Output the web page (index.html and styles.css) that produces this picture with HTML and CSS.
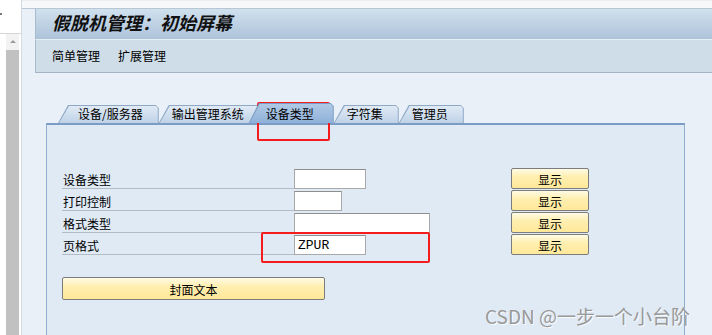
FILE: index.html
```html
<!DOCTYPE html>
<html lang="zh">
<head>
  <meta charset="UTF-8" />
  <title>假脱机管理: 初始屏幕</title>
  <link rel="stylesheet" href="styles.css">
</head>
<body>

<div class="side">
  <div class="side-top"><span class="side-dot"></span></div>
  <div class="scroll">
    <div class="scroll-up"><span class="arrow"></span></div>
    <div class="scroll-track"></div>
  </div>
</div>

<div class="main">
  <div class="main-top"></div>

  <div class="screen">
    <div class="titlebar">假脱机管理：初始屏幕</div>
    <div class="menubar">
      <a>简单管理</a>
      <a>扩展管理</a>
    </div>

    <div class="content">
      <div class="tabs">
        <div class="tab first">设备/服务器</div>
        <div class="tab">输出管理系统</div>
        <div class="tab active">设备类型</div>
        <div class="tab">字符集</div>
        <div class="tab">管理员</div>
      </div>

      <div class="panel">
        <div class="row">
          <label class="lbl">设备类型</label>
          <div class="field"><input class="inp w-m" type="text" value="" /></div>
          <button class="btn">显示</button>
        </div>
        <div class="row">
          <label class="lbl">打印控制</label>
          <div class="field"><input class="inp w-s" type="text" value="" /></div>
          <button class="btn">显示</button>
        </div>
        <div class="row">
          <label class="lbl">格式类型</label>
          <div class="field"><input class="inp w-l" type="text" value="" /></div>
          <button class="btn">显示</button>
        </div>
        <div class="row">
          <label class="lbl">页格式</label>
          <div class="field"><input class="inp w-m" type="text" value="ZPUR" /></div>
          <button class="btn">显示</button>
        </div>

        <button class="btn btn-wide">封面文本</button>
      </div>
    </div>
  </div>
</div>

<div class="mark mark-tab"></div>
<div class="mark mark-field"></div>
<div class="watermark">CSDN @一步一个小台阶</div>

</body>
</html>
```

FILE: styles.css
```css
* { margin: 0; padding: 0; box-sizing: border-box; }
body {
  width: 712px; height: 335px; overflow: hidden; display: flex; position: relative;
  font-family: "Noto Sans CJK SC", "Liberation Sans", sans-serif; font-size: 12px; color: #000;
  background: #fff;
}

/* left window strip */
.side { width: 21px; flex: none; background: #fff; }
.side-top { height: 34px; border-bottom: 1px solid #d6d6d6; position: relative; }
.side-dot { position: absolute; left: 0; top: 13px; width: 2px; height: 2px; background: #777; }
.scroll { margin-left: 6px; width: 13px; }
.scroll-up { height: 16px; background: #f2f2f2; display: flex; justify-content: center; padding-top: 6px; }
.arrow { width: 0; height: 0; border-left: 3px solid transparent; border-right: 3px solid transparent; border-bottom: 3px solid #9a9a9a; }
.scroll-track { height: 300px; background: #c1c1c1; }

.main { flex: 1; background: #e9f0f7; border-left: 1px solid #d3dae2; }
.main-top { height: 9px; background: #f7f8f9; border-top: 1px solid #eceef0; border-bottom: 1px solid #b9c7d4; }

.screen { margin-left: 13px; }
.titlebar {
  height: 31px; padding-left: 16px; border-left: 1px solid #a8bacb;
  background: linear-gradient(#d0e1ee, #adc3da);
  border-bottom: 1px solid #e6eef5;
  font-size: 18px; font-weight: bold; font-style: italic; line-height: 27px; color: #111;
}
.menubar {
  height: 33px; padding-left: 16px; display: flex; gap: 18px;
  background: #cfdde8; border-left: 1px solid #a8bacb; border-bottom: 1px solid #a2b4c4;
  line-height: 32px;
}

.content { margin-left: 11px; }

/* tab strip */
.tabs { display: flex; align-items: flex-end; height: 20px; margin-top: 30px; padding-left: 12px; }
.tab {
  position: relative; height: 18px; line-height: 18px; padding: 0 16px 0 13px;
  background: #8ea9c8; white-space: nowrap;
  clip-path: polygon(10px 0, calc(100% - 3px) 0, 100% 3px, 100% 100%, 0 100%);
}
.tab::before {
  content: ""; position: absolute; top: 1px; right: 1px; bottom: 0; left: 1px; z-index: -1;
  background: linear-gradient(#e0eaf5, #bfd2e7);
  clip-path: polygon(10px 0, calc(100% - 2px) 0, 100% 2px, 100% 100%, 0 100%);
}
.tab.first { padding-left: 20px; }
.tab.active { height: 20px; line-height: 21px; margin-left: -11px; padding: 0 20px 0 17px; z-index: 1; background: #7b9cc4; }
.tab.active::before { background: linear-gradient(#b0c9e5, #8fb1d9); }

/* panel */
.panel {
  width: 639px; height: 215px; padding: 42px 0 0 15px;
  background: #dfeaf5; border: 1px solid #8fadcf; border-top: 2px solid #7b9cc4;
}
.row { display: flex; align-items: flex-end; height: 22px; }
.lbl { width: 232px; line-height: 16px; padding-left: 1px; border-bottom: 1px solid #b3bcc6; }
.field { width: 217px; display: flex; }
.inp {
  height: 20px; padding: 0 3px; border: 1px solid #a9a9a9; border-top-color: #8e8e8e;
  background: #fff; font-family: "Liberation Mono", monospace; font-size: 13px; color: #000;
  outline: none;
}
.w-s { width: 48px; }
.w-m { width: 72px; }
.w-l { width: 136px; }

.btn {
  width: 78px; height: 21px; padding-top: 2px; line-height: 17px;
  font-family: "Noto Sans CJK SC", "Liberation Sans", sans-serif; font-size: 12px; color: #000;
  border: 1px solid #7c7c7c; border-radius: 2px;
  background: linear-gradient(#fffbe6, #ffefb0 40%, #ffe89a);
}
.btn-wide { display: block; width: 263px; height: 23px; margin-top: 22px; line-height: 18px; }

/* annotations over the screenshot */
.mark { position: absolute; border: 2px solid #f41c1c; border-radius: 2px; }
.mark-tab { left: 257px; top: 102px; width: 73px; height: 39px; }
.mark-field { left: 261px; top: 232px; width: 169px; height: 31px; }
.watermark {
  position: absolute; left: 485px; top: 302px; font-size: 19px; white-space: nowrap;
  color: #999; text-shadow: 1px 1px 0 rgba(255,255,255,0.8);
}
```
